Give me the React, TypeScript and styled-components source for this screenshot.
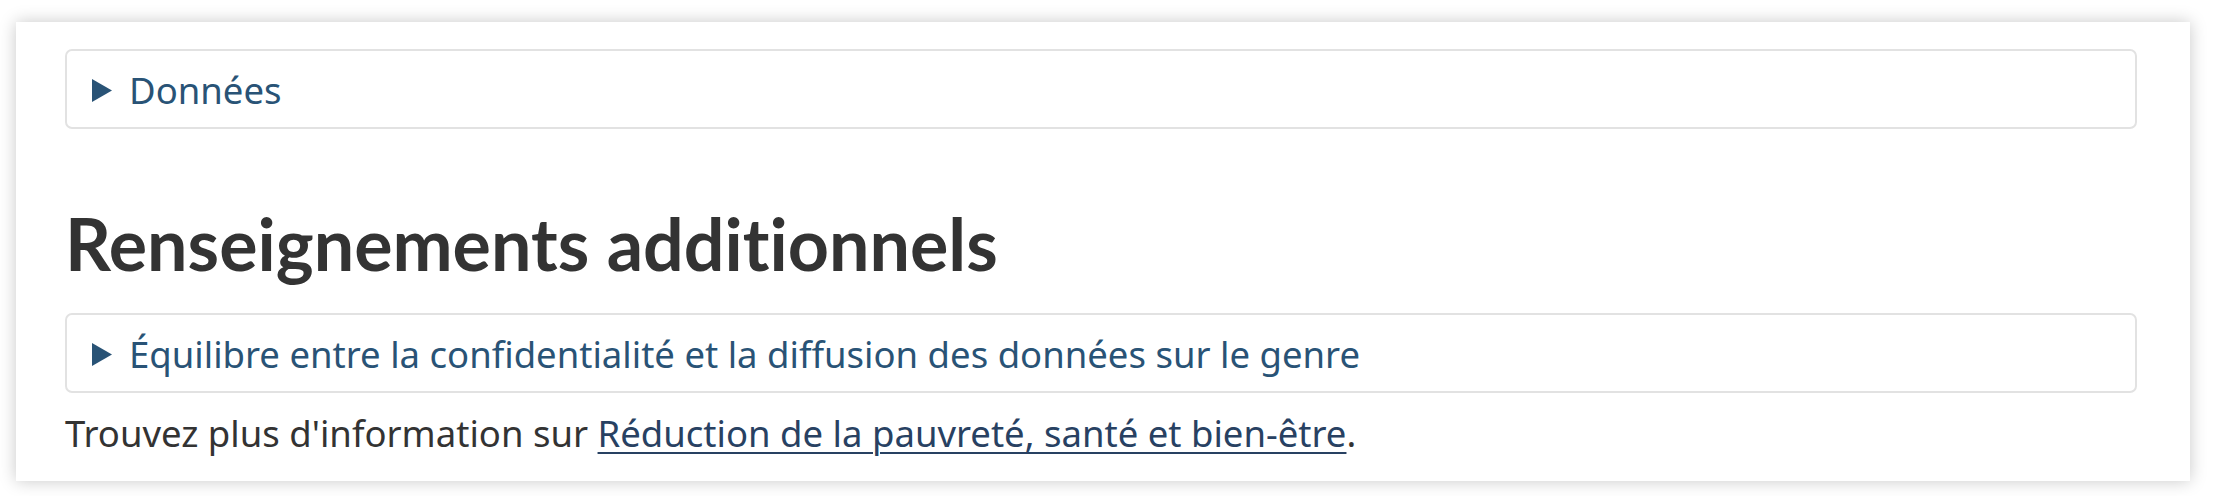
import React from 'react';
import styled, {createGlobalStyle} from 'styled-components';

const GlobalStyle = createGlobalStyle`
  html, body {
    margin: 0;
    padding: 0;
    background: #ffffff;
  }
  body {
    font-family: "Noto Sans", "Open Sans", sans-serif;
    color: #333333;
  }
`;

const Page = styled.div`
  padding: 22px 34px 16px 16px;
`;

const Card = styled.section`
  background: #ffffff;
  box-shadow: 0 0 16px rgba(0, 0, 0, 0.22);
  padding: 27px 53px 22px 49px;
`;

const Details = styled.div`
  border: 2px solid #e2e2e2;
  border-radius: 7px;
  padding: 13px 25px 11px;
`;

const Summary = styled.div`
  display: flex;
  align-items: center;
  gap: 17px;
  font-size: 36.5px;
  line-height: 52px;
  color: #295376;
  cursor: pointer;
`;

const Heading = styled.h2`
  font-family: Lato, "Noto Sans", sans-serif;
  font-weight: 700;
  font-size: 71.8px;
  line-height: 80px;
  font-variant-ligatures: none;
  color: #333333;
  margin: 74px 0 30px;
`;

const Paragraph = styled.p`
  font-size: 36.5px;
  line-height: 52px;
  margin: 14px 0 0;
`;

const Link = styled.a`
  color: #284162;
  text-decoration: underline;
  text-underline-offset: 5px;
  text-decoration-thickness: 2px;
`;

function Marker() {
    return (
        <svg width="20" height="23" viewBox="0 0 20 23">
            <polygon points="0,0 20,11.5 0,23" fill="#295376"/>
        </svg>
    );
}

function Disclosure({label}: {label: string}) {
    return (
        <Details>
            <Summary>
                <Marker/>
                <span>{label}</span>
            </Summary>
        </Details>
    );
}

function App() {
    return (
        <Page>
            <GlobalStyle/>
            <Card>
                <Disclosure label="Données"/>
                <Heading>Renseignements additionnels</Heading>
                <Disclosure label="Équilibre entre la confidentialité et la diffusion des données sur le genre"/>
                <Paragraph>
                    Trouvez plus d'information sur{' '}
                    <Link href="#">Réduction de la pauvreté, santé et bien-être</Link>.
                </Paragraph>
            </Card>
        </Page>
    );
}

export default App;
